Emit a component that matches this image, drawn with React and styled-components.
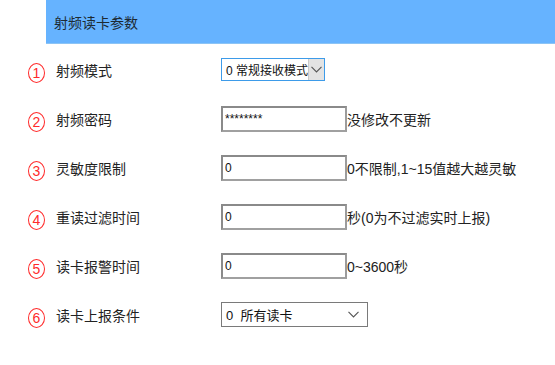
import React from "react";
import styled, { createGlobalStyle } from "styled-components";

const GlobalStyle = createGlobalStyle`
  html, body {
    margin: 0;
    padding: 0;
    background: #ffffff;
  }
  body {
    font-family: "Liberation Sans", "Noto Sans CJK SC", sans-serif;
    color: #222;
  }
`;

const Page = styled.div`
  width: 555px;
  height: 365px;
  overflow: hidden;
`;

const Header = styled.div`
  margin-left: 46px;
  height: 44px;
  background-color: #66b3ff;
  border-bottom: 1px solid #8cc4f5;
  box-sizing: border-box;
  padding-left: 8px;
  display: flex;
  align-items: center;
  font-size: 14px;
  color: #1d2a33;
`;

const Form = styled.div`
  margin-top: 1px;
  display: flex;
  flex-direction: column;
`;

const Row = styled.div`
  height: 49px;
  display: flex;
  align-items: center;
  padding-left: 28px;
`;

const Badge = styled.span`
  width: 15px;
  height: 18px;
  margin-top: 6px;
  margin-right: 11px;
  border: 1.3px solid #ff2a2a;
  border-radius: 50%;
  display: flex;
  align-items: center;
  justify-content: center;
  color: #ff2a2a;
  font-size: 14px;
  font-family: "Liberation Sans", sans-serif;
  flex-shrink: 0;
`;

const Label = styled.span`
  width: 165px;
  font-size: 14px;
  color: #222;
  flex-shrink: 0;
`;

const TextBox = styled.input`
  width: 126px;
  height: 26px;
  box-sizing: border-box;
  border: 2px solid #8a8a8a;
  border-right-color: #9c9c9c;
  border-bottom-color: #a0a0a0;
  padding: 0 2px;
  font-size: 12px;
  font-family: "Liberation Sans", sans-serif;
  color: #111;
  background: #fff;
  outline: none;
  flex-shrink: 0;
`;

const Note = styled.span`
  font-size: 14px;
  color: #222;
  white-space: nowrap;
`;

const SelectWrap = styled.div`
  width: ${(p) => p.$width}px;
  height: ${(p) => p.$height}px;
  box-sizing: border-box;
  border: 1px solid ${(p) => (p.$active ? "#3d9be9" : "#7a7a7a")};
  background: #fff;
  display: flex;
  align-items: center;
  flex-shrink: 0;
`;

const SelectText = styled.span`
  flex: 1;
  padding-left: 4px;
  font-size: ${(p) => p.$size}px;
  color: #111;
  white-space: pre;
  overflow: hidden;
`;

const Arrow = styled.span`
  width: 15px;
  height: 100%;
  display: flex;
  align-items: center;
  justify-content: center;
  background: ${(p) => (p.$shaded ? "#e3e3e3" : "transparent")};
  border-left: ${(p) => (p.$shaded ? "1px solid #c9c9c9" : "none")};
  margin-right: ${(p) => (p.$shaded ? "0" : "6px")};
`;

const Chevron = () => (
  <svg width="11" height="7" viewBox="0 0 11 7">
    <path d="M0.5 0.8 L5.5 6 L10.5 0.8" fill="none" stroke="#555" strokeWidth="1.1" />
  </svg>
);

const Select = ({ text, width, height, size, active }) => (
  <SelectWrap $width={width} $height={height} $active={active}>
    <SelectText $size={size}>{text}</SelectText>
    <Arrow $shaded={active}>
      <Chevron />
    </Arrow>
  </SelectWrap>
);

const rows = [
  { n: 1, label: "射频模式", kind: "select", text: "0 常规接收模式", width: 104, height: 23, size: 12, active: true },
  { n: 2, label: "射频密码", kind: "input", value: "********", note: "没修改不更新" },
  { n: 3, label: "灵敏度限制", kind: "input", value: "0", note: "0不限制,1~15值越大越灵敏" },
  { n: 4, label: "重读过滤时间", kind: "input", value: "0", note: "秒(0为不过滤实时上报)" },
  { n: 5, label: "读卡报警时间", kind: "input", value: "0", note: "0~3600秒" },
  { n: 6, label: "读卡上报条件", kind: "select", text: "0  所有读卡", width: 147, height: 25, size: 13 },
];

const App = () => {
  return (
    <Page>
      <GlobalStyle />
      <Header>射频读卡参数</Header>
      <Form>
        {rows.map((r) => (
          <Row key={r.n}>
            <Badge>{r.n}</Badge>
            <Label>{r.label}</Label>
            {r.kind === "select" ? (
              <Select text={r.text} width={r.width} height={r.height} size={r.size} active={r.active} />
            ) : (
              <>
                <TextBox type="text" defaultValue={r.value} readOnly />
                <Note>{r.note}</Note>
              </>
            )}
          </Row>
        ))}
      </Form>
    </Page>
  );
};

export default App;
